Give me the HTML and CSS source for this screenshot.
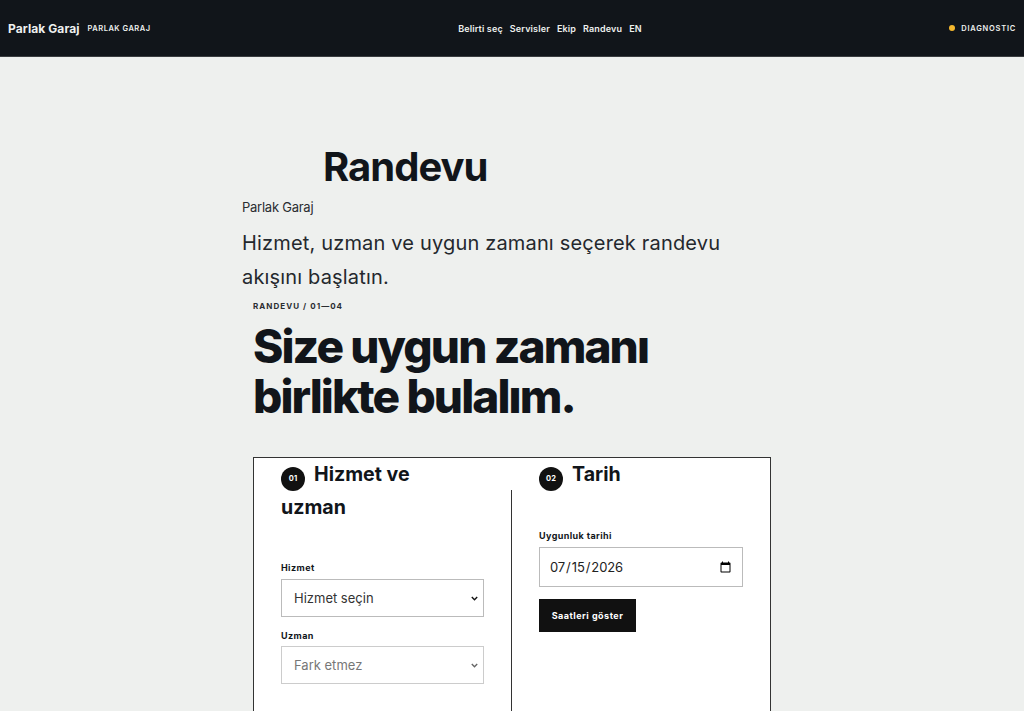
FILE: index.html
```html
<!DOCTYPE html>
<html lang="tr">
<head>
<meta charset="utf-8">
<title>Randevu</title>
<link rel="stylesheet" href="styles.css">
</head>
<body>
<header class="topbar">
  <div class="brand"><strong>Parlak Garaj</strong><span>PARLAK GARAJ</span></div>
  <nav class="nav"><a>Belirti seç</a><a>Servisler</a><a>Ekip</a><a>Randevu</a><a>EN</a></nav>
  <div class="status"><i></i><span>DIAGNOSTIC</span></div>
</header>
<main class="page">
  <h1 class="title">Randevu</h1>
  <p class="crumb">Parlak Garaj</p>
  <p class="lead">Hizmet, uzman ve uygun zamanı seçerek randevu akışını başlatın.</p>
  <section class="booking">
    <p class="eyebrow">RANDEVU / 01—04</p>
    <h2 class="headline">Size uygun zamanı birlikte bulalım.</h2>
    <div class="card">
      <div class="col col-one">
        <h3 class="step"><b>01</b>Hizmet ve uzman</h3>
        <label class="label" for="s">Hizmet</label>
        <select class="field" id="s"><option>Hizmet seçin</option></select>
        <label class="label second" for="u">Uzman</label>
        <select class="field muted" id="u"><option>Fark etmez</option></select>
      </div>
      <div class="col col-two">
        <h3 class="step"><b>02</b>Tarih</h3>
        <label class="label date-label" for="d">Uygunluk tarihi</label>
        <input class="field date" id="d" type="date" value="2026-07-15">
        <button class="btn" type="button">Saatleri göster</button>
      </div>
    </div>
  </section>
</main>
</body>
</html>
```
FILE: styles.css
```css
* { box-sizing: border-box; }
html, body { margin: 0; height: 711px; overflow: hidden; }
body { background: #eef0ee; color: #11151a; font-family: Inter, "Noto Sans", sans-serif; }
.topbar { height: 57px; background: #11151a; border-bottom: 1px solid #3a3d40; color: #eef0ee; display: flex; justify-content: space-between; align-items: center; padding: 0 8px; }
.brand { display: flex; align-items: center; gap: 8px; }
.brand strong { font-size: 12px; font-weight: 700; letter-spacing: .08px; }
.brand span { font-size: 7.5px; font-weight: 600; letter-spacing: .5px; }
.nav { display: flex; gap: 7px; font-size: 9px; font-weight: 600; letter-spacing: .15px; }
.status { display: flex; align-items: center; gap: 6px; font-size: 7.5px; font-weight: 600; letter-spacing: .75px; }
.status i { width: 6px; height: 6px; border-radius: 50%; background: #f5b82e; }
.page { width: 540px; margin-left: 242px; }
.title { margin: 86px 0 0 81px; font-size: 40px; line-height: 48px; font-weight: 700; letter-spacing: -1px; }
.crumb { margin: 6px 0 0; font-size: 13px; line-height: 20px; letter-spacing: -.25px; color: #2a2d31; }
.lead { margin: 9px 0 0; width: 510px; font-size: 20px; line-height: 34px; letter-spacing: .17px; color: #24282d; }
.booking { padding-left: 11px; }
.eyebrow { margin: 5px 0 0; font-size: 8px; line-height: 14px; font-weight: 700; letter-spacing: 1.05px; color: #2a2d31; }
.headline { margin: 8px 0 0; width: 500px; font-size: 46px; line-height: 50px; font-weight: 800; letter-spacing: -1.9px; }
.card { margin-top: 36px; width: 518px; height: 300px; background: #fff; border: 1px solid #333; display: grid; grid-template-columns: 257px 1fr; }
.col { padding: 0 27px; min-width: 0; }
.col-two { margin-top: 32px; border-left: 1px solid #333; }
.step { margin: 0; font-size: 19.6px; line-height: 33px; font-weight: 700; }
.col-one .step { max-width: 170px; }
.col-two .step { margin-top: -32px; }
.step b { display: inline-flex; align-items: center; justify-content: center; width: 24px; height: 24px; margin-right: 9px; border-radius: 50%; background: #111; color: #fff; font-size: 7.5px; font-weight: 700; vertical-align: 0; }
.label { display: block; font-size: 9px; line-height: 12px; font-weight: 700; letter-spacing: .4px; }
.col-one .label { margin-top: 38px; }
.col-one .label.second { margin-top: 13px; }
.field { display: block; width: 203px; background: #fff; border: 1px solid #bbb; border-radius: 0; font-family: Inter, sans-serif; font-size: 13px; color: #333; margin-top: 5px; }
select.field { height: 38px; padding: 0 4px 0 12px; appearance: none; background-repeat: no-repeat; background-position: right 5px center; background-size: 7px 5px; background-image: url("data:image/svg+xml,%3Csvg xmlns='http://www.w3.org/2000/svg' viewBox='0 0 7 5'%3E%3Cpath d='M.8 1l2.7 2.7L6.2 1' fill='none' stroke='%23111' stroke-width='1.4'/%3E%3C/svg%3E"); }
.second + .field { margin-top: 4px; }
.muted { color: #777; border-color: #ccc; }
select.muted { background-image: url("data:image/svg+xml,%3Csvg xmlns='http://www.w3.org/2000/svg' viewBox='0 0 7 5'%3E%3Cpath d='M.8 1l2.7 2.7L6.2 1' fill='none' stroke='%23666' stroke-width='1.4'/%3E%3C/svg%3E"); }
.date-label { margin-top: 39px; }
.date { height: 40px; width: 204px; padding: 0 8px 0 9px; margin-top: 5px; color: #222; letter-spacing: -.1px; }
.btn { display: block; margin-top: 12px; width: 97px; height: 33px; border: 0; padding: 0; background: #111; color: #fff; font-family: Inter, sans-serif; font-size: 9px; font-weight: 700; letter-spacing: .5px; }
```
